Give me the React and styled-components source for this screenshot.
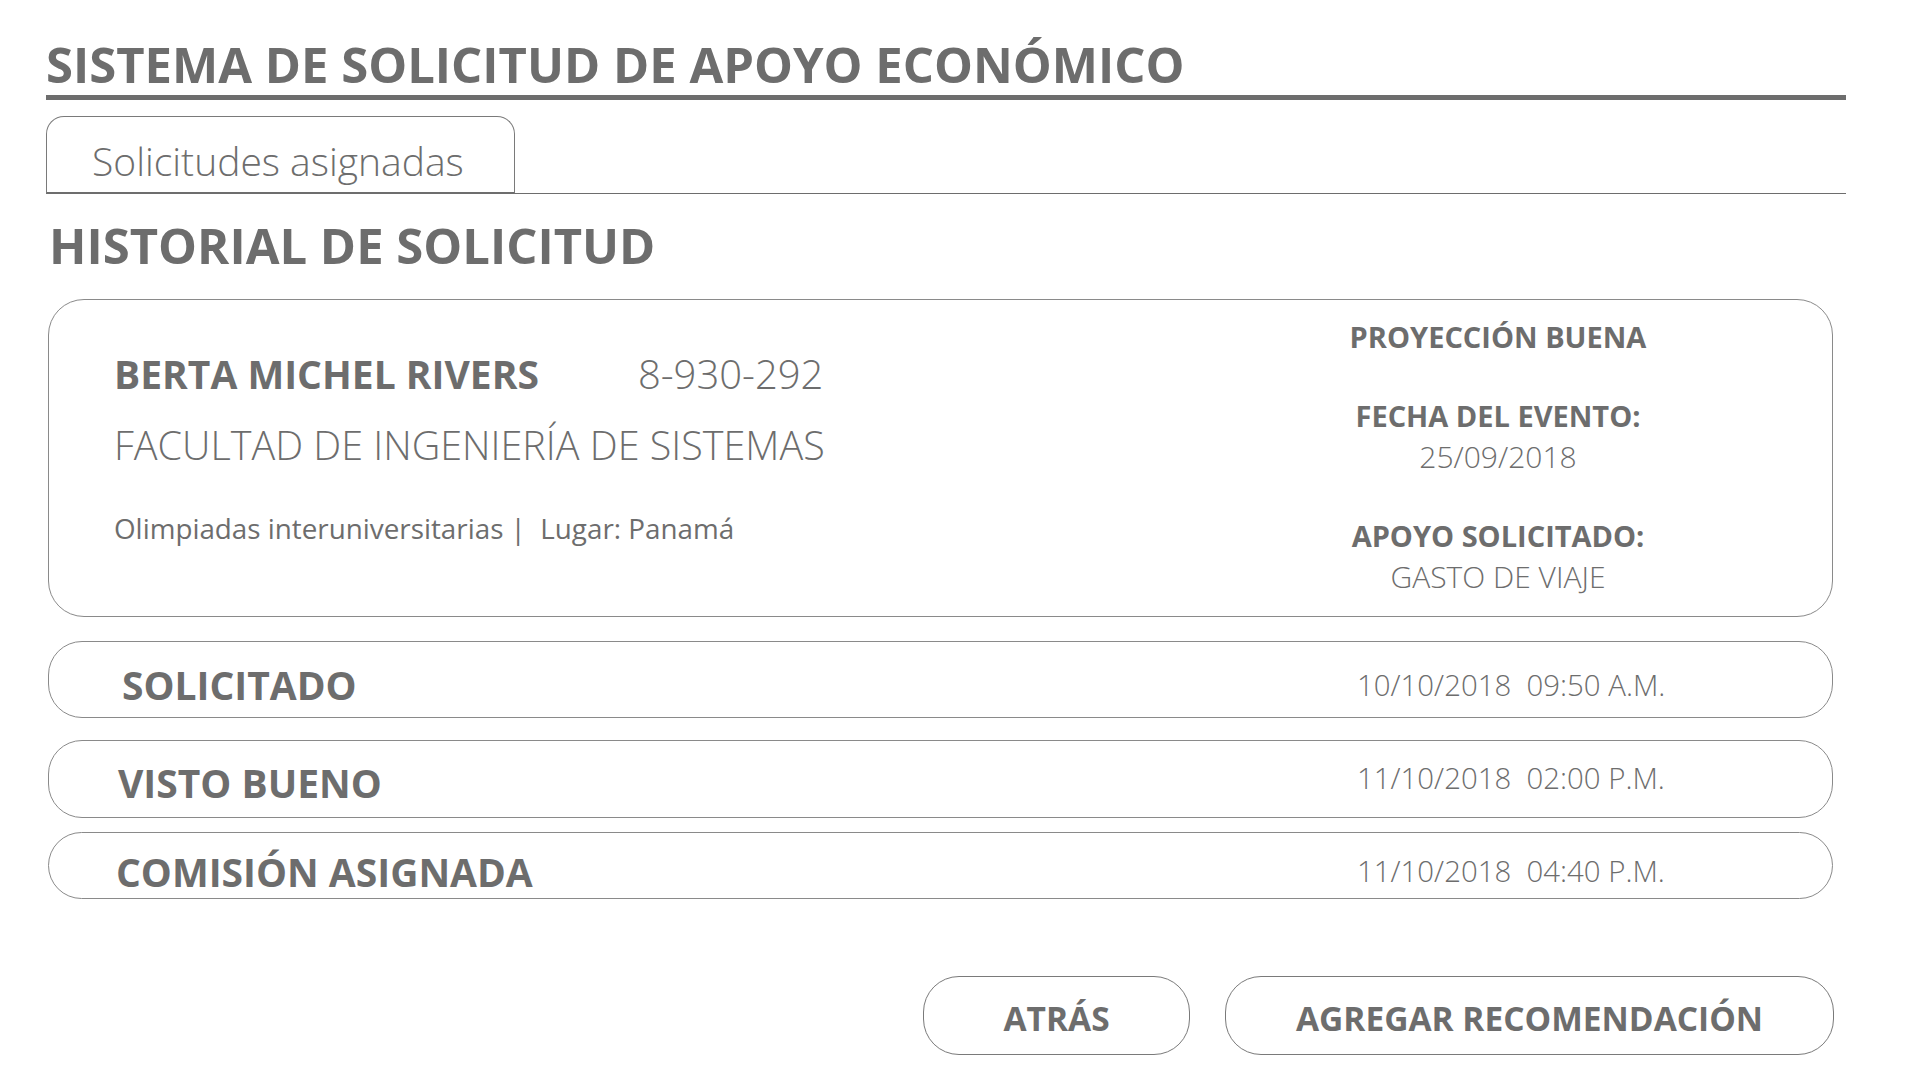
import styled, { createGlobalStyle } from "styled-components";

const GlobalStyle = createGlobalStyle`
  body {
    margin: 0;
    background: #ffffff;
    font-family: "Open Sans", "Noto Sans", sans-serif;
    color: #6d6d6d;
  }
`;

const Page = styled.div`
  width: 1800px;
  padding: 36px 0 0 46px;
`;

const Title = styled.h1`
  margin: 0;
  font-size: 49px;
  line-height: 56px;
  font-weight: 700;
  color: #6d6d6d;
`;

const TitleBar = styled.div`
  margin-top: 3px;
  height: 5px;
  background: #6d6d6d;
`;

const TabRow = styled.div`
  margin-top: 16px;
  display: flex;
  border-bottom: 1px solid #6d6d6d;
`;

const Tab = styled.div`
  width: 469px;
  height: 78px;
  box-sizing: border-box;
  border: 1px solid #7a7a7a;
  border-bottom: 2px solid #6d6d6d;
  margin-bottom: -1px;
  border-radius: 18px 18px 0 0;
  padding: 11px 0 0 45px;
  font-size: 39px;
  line-height: 66px;
  font-weight: 300;
`;

const Heading = styled.h2`
  margin: 23px 0 0 3px;
  font-size: 49px;
  line-height: 56px;
  font-weight: 700;
`;

const Card = styled.div`
  margin: 26px 0 0 2px;
  width: 1785px;
  height: 318px;
  box-sizing: border-box;
  border: 1px solid #8a8a8a;
  border-radius: 36px;
  display: flex;
`;

const InfoCol = styled.div`
  flex: 1;
  padding: 51px 0 0 65px;
`;

const NameRow = styled.div`
  display: flex;
  gap: 99px;
  line-height: 46px;
`;

const Name = styled.span`
  font-size: 39px;
  font-weight: 700;
`;

const IdNumber = styled.span`
  font-size: 40px;
  font-weight: 300;
`;

const Faculty = styled.div`
  margin-top: 25px;
  font-size: 39.5px;
  line-height: 46px;
  font-weight: 300;
`;

const EventLine = styled.div`
  margin-top: 43px;
  font-size: 27.8px;
  line-height: 34px;
  font-weight: 400;
`;

const SideCol = styled.div`
  width: 420px;
  margin-right: 124px;
  padding-top: 19px;
  display: flex;
  flex-direction: column;
  align-items: center;
  gap: 43px;
`;

const SideGroup = styled.div`
  display: flex;
  flex-direction: column;
  align-items: center;
  gap: 5px;
`;

const SideLabel = styled.div`
  font-size: 29px;
  line-height: 36px;
  font-weight: 700;
`;

const SideValue = styled.div`
  font-size: 30px;
  line-height: 36px;
  font-weight: 300;
`;

const StatusList = styled.div`
  margin: 24px 0 0 2px;
  width: 1785px;
  display: flex;
  flex-direction: column;
`;

const StatusRow = styled.div`
  height: ${(p) => p.$h}px;
  margin-top: ${(p) => p.$gap}px;
  box-sizing: border-box;
  border: 1px solid #8a8a8a;
  border-radius: 34px;
  display: grid;
  grid-template-columns: 1fr 475px;
  align-items: center;
  padding-top: ${(p) => p.$shift}px;
`;

const StatusLabel = styled.div`
  padding-left: ${(p) => p.$indent}px;
  font-size: 39px;
  line-height: 44px;
  font-weight: 700;
`;

const StatusDate = styled.div`
  font-size: 29.4px;
  line-height: 36px;
  font-weight: 300;
  white-space: pre;
  margin-top: ${(p) => p.$lift}px;
`;

const Actions = styled.div`
  margin-top: 77px;
  width: 1788px;
  display: flex;
  justify-content: flex-end;
  gap: 35px;
`;

const ActionButton = styled.button`
  width: ${(p) => p.$w}px;
  height: 79px;
  border: 1px solid #7a7a7a;
  border-radius: 36px;
  background: #ffffff;
  color: #6d6d6d;
  font-family: "Open Sans", "Noto Sans", sans-serif;
  font-size: 33.5px;
  font-weight: 700;
  padding: 5px 0 0;
  cursor: pointer;
`;

const statuses = [
  { label: "SOLICITADO", date: "10/10/2018  09:50 A.M.", h: 77, gap: 0, shift: 10, indent: 73, lift: 0 },
  { label: "VISTO BUENO", date: "11/10/2018  02:00 P.M.", h: 78, gap: 22, shift: 8, indent: 69, lift: -10 },
  { label: "COMISIÓN ASIGNADA", date: "11/10/2018  04:40 P.M.", h: 67, gap: 14, shift: 12, indent: 67, lift: -2 },
];

const App = () => {
  return (
    <>
      <GlobalStyle />
      <Page>
        <Title>SISTEMA DE SOLICITUD DE APOYO ECONÓMICO</Title>
        <TitleBar />
        <TabRow>
          <Tab>Solicitudes asignadas</Tab>
        </TabRow>
        <Heading>HISTORIAL DE SOLICITUD</Heading>
        <Card>
          <InfoCol>
            <NameRow>
              <Name>BERTA MICHEL RIVERS</Name>
              <IdNumber>8-930-292</IdNumber>
            </NameRow>
            <Faculty>FACULTAD DE INGENIERÍA DE SISTEMAS</Faculty>
            <EventLine>Olimpiadas interuniversitarias |&nbsp; Lugar: Panamá</EventLine>
          </InfoCol>
          <SideCol>
            <SideLabel>PROYECCIÓN BUENA</SideLabel>
            <SideGroup>
              <SideLabel>FECHA DEL EVENTO:</SideLabel>
              <SideValue>25/09/2018</SideValue>
            </SideGroup>
            <SideGroup>
              <SideLabel>APOYO SOLICITADO:</SideLabel>
              <SideValue>GASTO DE VIAJE</SideValue>
            </SideGroup>
          </SideCol>
        </Card>
        <StatusList>
          {statuses.map((s) => (
            <StatusRow key={s.label} $h={s.h} $gap={s.gap} $shift={s.shift}>
              <StatusLabel $indent={s.indent}>{s.label}</StatusLabel>
              <StatusDate $lift={s.lift}>{s.date}</StatusDate>
            </StatusRow>
          ))}
        </StatusList>
        <Actions>
          <ActionButton $w={267}>ATRÁS</ActionButton>
          <ActionButton $w={609}>AGREGAR RECOMENDACIÓN</ActionButton>
        </Actions>
      </Page>
    </>
  );
};

export default App;
